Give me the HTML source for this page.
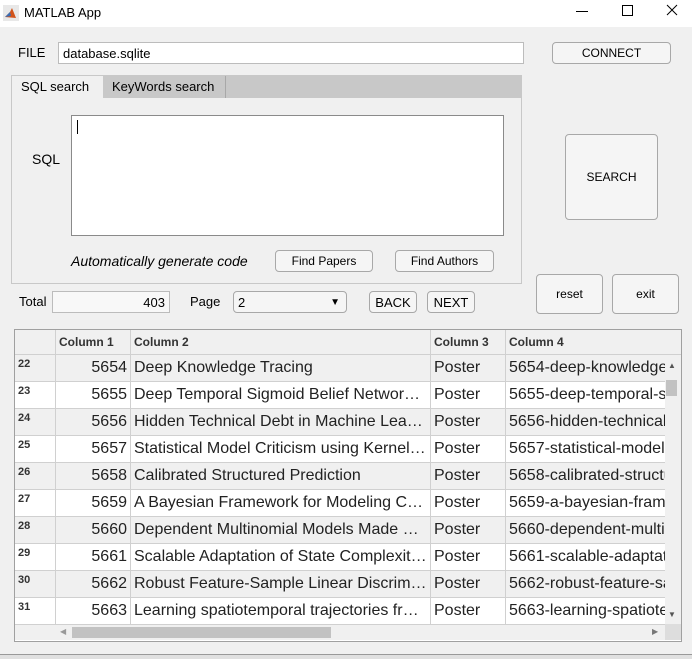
<!DOCTYPE html>
<html><head><style>
body{margin:0;width:692px;height:658px;background:#f0f0f0;font-family:"Liberation Sans",Arial,sans-serif;position:relative;overflow:hidden;font-size:12px;color:#000}
.a{position:absolute}
.btn{position:absolute;background:#f5f5f5;border:1px solid #a8a8a8;border-radius:4px;box-sizing:border-box;display:flex;align-items:center;justify-content:center;font-size:12px}
.inp{position:absolute;background:#fff;border:1px solid #bcbcbc;box-sizing:border-box}
table{border-collapse:collapse;table-layout:fixed;position:absolute;left:-1px;top:-1px}
td{border:1px solid #d0d0d0;height:26px;line-height:26px;padding:0 3px;font-size:16px;white-space:nowrap;overflow:hidden;color:#222}
td.n{font-size:11px;line-height:12px;height:23px;font-weight:bold;vertical-align:top;padding-top:3px;padding-bottom:0;color:#333}
td.r{text-align:right}
tr.h td{font-size:12px;font-weight:bold;color:#333;background:#f0f0f0;height:24px;line-height:24px}
tr.g td{background:#f0f0f0}
tr.w td{background:#fff}
</style></head><body>
<div class="a" style="left:0;top:0;width:692px;height:27px;background:#fff"></div>
<svg class="a" style="left:3px;top:5px" width="16" height="16"><rect x="0" y="0" width="16" height="16" fill="#e8e8e8"/><path d="M2 12 L7 7 L9 3 L13 13 Z" fill="#d2541b"/><path d="M2 12 L7 7 L8 11Z" fill="#3a6fb5"/></svg>
<div class="a" style="left:24px;top:5px;font-size:13px">MATLAB App</div>
<div class="a" style="left:576px;top:11px;width:12px;height:1px;background:#000"></div>
<div class="a" style="left:622px;top:5px;width:9px;height:9px;border:1px solid #000"></div>
<svg class="a" style="left:666px;top:4px" width="12" height="12"><path d="M1 1L11 11M11 1L1 11" stroke="#000" stroke-width="1"/></svg>

<div class="a" style="left:18px;top:45px;font-size:13px">FILE</div>
<div class="inp" style="left:58px;top:42px;width:466px;height:22px;padding:3px 4px;font-size:13px">database.sqlite</div>
<div class="btn" style="left:552px;top:42px;width:119px;height:22px">CONNECT</div>

<div class="a" style="left:11px;top:75px;width:511px;height:209px;border:1px solid #c8c8c8;box-sizing:border-box;background:#f0f0f0"></div>
<div class="a" style="left:12px;top:76px;width:509px;height:22px;background:#c8c8c8"></div>
<div class="a" style="left:12px;top:76px;width:91px;height:23px;background:#f0f0f0;font-size:13px;padding:3px 0 0 9px;box-sizing:border-box">SQL search</div>
<div class="a" style="left:103px;top:76px;width:123px;height:22px;border-right:1px solid #a8a8a8;box-sizing:border-box;font-size:13px;padding:3px 0 0 9px">KeyWords search</div>
<div class="a" style="left:32px;top:151px;font-size:14px">SQL</div>
<div class="inp" style="left:71px;top:115px;width:433px;height:121px;border-color:#8a8a8a"></div>
<div class="a" style="left:77px;top:120px;width:1px;height:14px;background:#000"></div>
<div class="a" style="left:71px;top:253px;font-size:14px;font-style:italic">Automatically generate code</div>
<div class="btn" style="left:275px;top:250px;width:98px;height:22px">Find Papers</div>
<div class="btn" style="left:395px;top:250px;width:99px;height:22px">Find Authors</div>

<div class="btn" style="left:565px;top:134px;width:93px;height:86px">SEARCH</div>
<div class="btn" style="left:536px;top:274px;width:67px;height:40px">reset</div>
<div class="btn" style="left:612px;top:274px;width:67px;height:40px">exit</div>

<div class="a" style="left:19px;top:294px;font-size:13px">Total</div>
<div class="inp" style="left:52px;top:291px;width:118px;height:22px;text-align:right;padding:3px 4px;font-size:13px;background:#f8f8f8">403</div>
<div class="a" style="left:190px;top:294px;font-size:13px">Page</div>
<div class="btn" style="left:233px;top:291px;width:114px;height:22px;justify-content:flex-start;padding-left:4px;font-size:13px">2<span style="position:absolute;right:6px;font-size:10px">▼</span></div>
<div class="btn" style="left:369px;top:291px;width:48px;height:22px;font-size:13px">BACK</div>
<div class="btn" style="left:427px;top:291px;width:48px;height:22px;font-size:13px">NEXT</div>

<div class="a" style="left:14px;top:329px;width:668px;height:313px;border:1px solid #a0a0a0;box-sizing:border-box;background:#fff;overflow:hidden">
<table style="width:700px">
<colgroup><col style="width:41px"><col style="width:75px"><col style="width:300px"><col style="width:75px"><col style="width:209px"></colgroup>
<tr class="h"><td></td><td>Column 1</td><td>Column 2</td><td>Column 3</td><td>Column 4</td></tr>
<tr class="g"><td class="n">22</td><td class="r">5654</td><td>Deep Knowledge Tracing</td><td>Poster</td><td>5654-deep-knowledge-tracing</td></tr>
<tr class="w"><td class="n">23</td><td class="r">5655</td><td>Deep Temporal Sigmoid Belief Networ…</td><td>Poster</td><td>5655-deep-temporal-sigmoid</td></tr>
<tr class="g"><td class="n">24</td><td class="r">5656</td><td>Hidden Technical Debt in Machine Lea…</td><td>Poster</td><td>5656-hidden-technical-debt</td></tr>
<tr class="w"><td class="n">25</td><td class="r">5657</td><td>Statistical Model Criticism using Kernel…</td><td>Poster</td><td>5657-statistical-model</td></tr>
<tr class="g"><td class="n">26</td><td class="r">5658</td><td>Calibrated Structured Prediction</td><td>Poster</td><td>5658-calibrated-structured</td></tr>
<tr class="w"><td class="n">27</td><td class="r">5659</td><td>A Bayesian Framework for Modeling C…</td><td>Poster</td><td>5659-a-bayesian-framework</td></tr>
<tr class="g"><td class="n">28</td><td class="r">5660</td><td>Dependent Multinomial Models Made …</td><td>Poster</td><td>5660-dependent-multinomial</td></tr>
<tr class="w"><td class="n">29</td><td class="r">5661</td><td>Scalable Adaptation of State Complexit…</td><td>Poster</td><td>5661-scalable-adaptation</td></tr>
<tr class="g"><td class="n">30</td><td class="r">5662</td><td>Robust Feature-Sample Linear Discrim…</td><td>Poster</td><td>5662-robust-feature-sample</td></tr>
<tr class="w"><td class="n">31</td><td class="r">5663</td><td>Learning spatiotemporal trajectories fr…</td><td>Poster</td><td>5663-learning-spatiotemporal</td></tr>
</table>
</div>
<div class="a" style="left:665px;top:355px;width:16px;height:270px;background:#f0f0f0"></div>
<div class="a" style="left:666px;top:380px;width:11px;height:16px;background:#c2c2c2"></div>
<div class="a" style="left:668px;top:361px;font-size:8px;color:#555">▲</div>
<div class="a" style="left:668px;top:610px;font-size:8px;color:#555">▼</div>
<div class="a" style="left:15px;top:624px;width:650px;height:16px;background:#f0f0f0;border-top:1px solid #d0d0d0;box-sizing:border-box"></div>
<div class="a" style="left:72px;top:627px;width:259px;height:11px;background:#c2c2c2"></div>
<div class="a" style="left:60px;top:627px;font-size:8px;color:#999">◀</div>
<div class="a" style="left:652px;top:627px;font-size:8px;color:#777">▶</div>
<div class="a" style="left:665px;top:624px;width:16px;height:16px;background:#ddd"></div>
<div class="a" style="left:0;top:654px;width:692px;height:4px;background:#e0e0e0;border-top:1px solid #999"></div>
</body></html>
